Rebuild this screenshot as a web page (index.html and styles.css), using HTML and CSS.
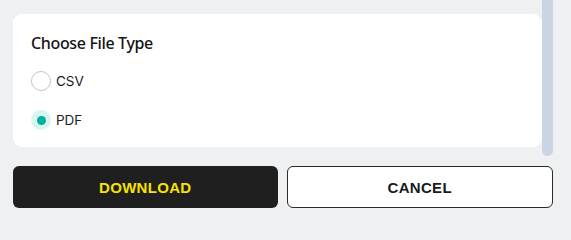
FILE: index.html
```html
<!DOCTYPE html>
<html>
<head>
<meta charset="utf-8">
<link rel="stylesheet" href="styles.css">
</head>
<body>
<div class="page">
  <div class="scroll">
    <div class="content">
      <div class="card">
        <div class="title">Choose File Type</div>
        <div class="options">
          <label class="option">
            <span class="radio"></span>
            <span class="label">CSV</span>
          </label>
          <label class="option">
            <span class="radio checked"><span class="dot"></span></span>
            <span class="label">PDF</span>
          </label>
        </div>
      </div>
    </div>
    <div class="scrollbar"></div>
  </div>
  <div class="actions">
    <button class="btn primary">DOWNLOAD</button>
    <button class="btn secondary">CANCEL</button>
  </div>
</div>
</body>
</html>
```
FILE: styles.css
```css
html, body {
  margin: 0;
  padding: 0;
  background: #eff0f2;
}
body {
  font-family: "Noto Sans", "Liberation Sans", sans-serif;
  width: 571px;
  height: 232px;
  overflow: hidden;
}
.page {
  padding-left: 13px;
  width: 540px;
}
.scroll {
  display: flex;
  height: 156px;
}
.content {
  flex: 1;
  padding-top: 14px;
}
.card {
  background: #ffffff;
  border-radius: 9px;
  height: 133px;
  box-sizing: border-box;
  padding: 18px 18px 0 18px;
}
.title {
  font-family: "Noto Sans", sans-serif;
  font-weight: 500;
  font-size: 16px;
  line-height: 22px;
  color: #141414;
  letter-spacing: -0.35px;
}
.options {
  display: flex;
  flex-direction: column;
  gap: 19px;
  margin-top: 17px;
}
.option {
  display: flex;
  align-items: center;
  gap: 5px;
  height: 20px;
}
.radio {
  width: 20px;
  height: 20px;
  box-sizing: border-box;
  border-radius: 50%;
  border: 1px solid #c4c4c4;
  display: flex;
  align-items: center;
  justify-content: center;
}
.radio.checked {
  border: none;
  background: #d8f5f1;
}
.dot {
  width: 9px;
  height: 9px;
  border-radius: 50%;
  background: #00b09e;
}
.label {
  font-family: "Inter", sans-serif;
  font-size: 13.5px;
  color: #1c1c1c;
}
.scrollbar {
  width: 11px;
  height: 156px;
  background: #c9d5e0;
  border-radius: 0 0 6px 6px;
}
.actions {
  display: flex;
  gap: 9px;
  margin-top: 10px;
}
.btn {
  flex: 1;
  height: 42px;
  border-radius: 6px;
  font-family: "Liberation Sans", sans-serif;
  font-weight: 700;
  font-size: 15px;
  letter-spacing: 0.3px;
  cursor: pointer;
}
.btn.primary {
  background: #1f1f1f;
  color: #f7e300;
  border: none;
}
.btn.secondary {
  background: #ffffff;
  color: #1a1a1a;
  border: 1px solid #2a2a2a;
}
```
